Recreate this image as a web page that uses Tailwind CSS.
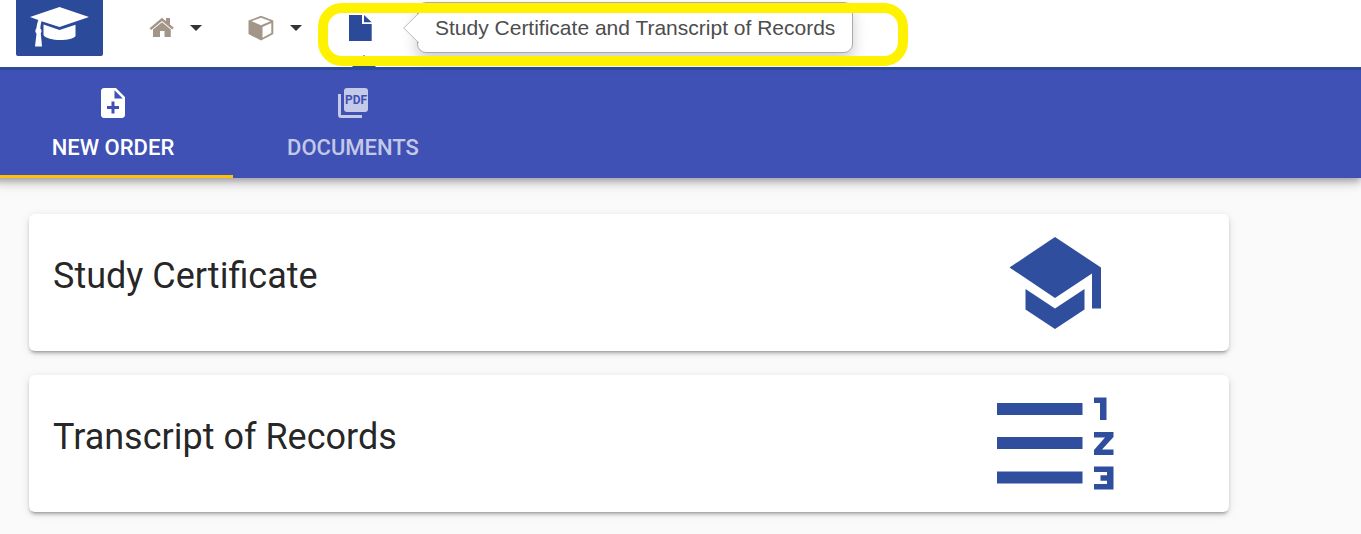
<!DOCTYPE html>
<html lang="en">
<head>
  <meta charset="UTF-8">
  <meta name="viewport" content="width=device-width, initial-scale=1.0">
  <title>Study Certificate and Transcript of Records</title>
  <script src="https://cdn.jsdelivr.net/npm/@tailwindcss/browser@4"></script>
</head>
<body class="min-h-screen overflow-x-hidden bg-[#fafafa] font-['Roboto',sans-serif]">
  <header class="relative z-10 h-[67px] bg-white px-4">
    <nav class="flex h-14 items-center gap-[46px]" aria-label="Main">
      <a href="#" aria-label="Start page" class="block h-14 w-[87px] rounded-b-xs bg-[#2c4a9a]">
        <svg class="h-14 w-[87px] fill-white" viewBox="0 0 87 56">
          <path d="M43.500 7 73 17 43.500 27 25.500 21.200Q24.500 24 24.300 28.500Q26.500 30.500 24.800 33.500L26 46.500H19L20.500 33.700Q18.200 31 20.300 28.500Q20.800 24 22.300 20L14 17Z"/>
          <path d="M27.500 24.500 43.500 30 59.500 24.700V36C56 41.500 31 41.500 27.500 35Z"/>
        </svg>
      </a>
      <button type="button" aria-label="Home" class="flex items-center gap-4">
        <svg class="h-6 w-[25px] fill-[#a39689]" viewBox="0 0 25 24">
          <path d="M.5 12.300 13 1.800 17 5.200V2H21V8.600L24.800 11.800 23.200 13.600 13 5 2.100 14.100Z"/>
          <path d="M13 6.200 21.800 13.500V21H15.500V15H11V21H4V13.600Z"/>
        </svg>
        <svg class="h-[6px] w-3 fill-[#333]" viewBox="0 0 12 6"><path d="M0 0H12L6 6Z"/></svg>
      </button>
      <button type="button" aria-label="Packages" class="flex items-center gap-4">
        <svg class="size-[26px]" viewBox="0 0 26 26">
          <path fill="#a39689" d="M13 .8 25.300 5.500V19L13 25.500.500 19V5.500Z"/>
          <path fill="#fff" d="M13 2.800 22.500 6.200 13 10.200 3.500 6.200ZM14.500 12 23.300 8V18L14.500 22.800Z"/>
        </svg>
        <svg class="h-[6px] w-3 fill-[#333]" viewBox="0 0 12 6"><path d="M0 0H12L6 6Z"/></svg>
      </button>
      <a href="#" aria-describedby="orders-tip" aria-label="Orders" class="relative flex h-14 items-center">
        <svg class="h-[26px] w-6 fill-[#2c4a9a]" viewBox="0 0 24 26">
          <path d="M1 0H14V9H23.700V26H1ZM16 0 23.700 7.200H16Z"/>
        </svg>
        <svg class="absolute top-[55px] left-1 h-3 w-6 fill-[#2c4a9a]" viewBox="0 0 24 12"><path d="M12 0 24 12H0Z"/></svg>
        <span id="orders-tip" role="tooltip" class="absolute top-[2px] left-[69px] flex h-[51px] items-center rounded-[9px] border border-[#aaa] bg-white px-[17px] font-['Liberation_Sans',sans-serif] text-[21px] whitespace-nowrap text-[#4d4d4d] shadow-[0_8px_15px_rgba(0,0,0,0.2)]">
          <svg class="absolute top-[10px] -left-[15px] h-[30px] w-4" viewBox="0 0 16 30">
            <path d="M16 0 .7 15 16 30" fill="#fff" stroke="#bbb"/>
          </svg>
          Study Certificate and Transcript of Records
        </span>
      </a>
    </nav>
    <!-- marker around the orders entry -->
    <div class="pointer-events-none absolute top-[3px] left-[318px] h-[63px] w-[590px] rounded-[24px] border-10 border-[#fff200]"></div>
  </header>

  <div class="overflow-x-clip">
    <div role="tablist" class="-ml-[7px] flex border-t-3 border-[#2c4a9a] bg-[#3f51b5] text-[22px] leading-[30px] font-medium text-white shadow-[0_3px_6px_-1px_rgba(0,0,0,0.2),0_6px_8px_rgba(0,0,0,0.14),0_2px_15px_rgba(0,0,0,0.12)]">
      <button type="button" role="tab" aria-selected="true" class="relative flex h-[108px] w-60 flex-col items-center justify-center gap-3">
        <svg class="size-9 fill-white" viewBox="0 0 24 24">
          <path d="M14 2H6c-1.100 0-1.990.9-1.990 2L4 20c0 1.100.89 2 1.990 2H18c1.100 0 2-.9 2-2V8l-6-6zm2 14h-3v3h-2v-3H8v-2h3v-3h2v3h3v2zm-3-7V3.500L18.500 9H13z"/>
        </svg>
        NEW ORDER
        <span class="absolute inset-x-0 bottom-0 h-[3px] bg-[#ffc107]"></span>
      </button>
      <button type="button" role="tab" aria-selected="false" class="flex h-[108px] w-60 flex-col items-center justify-center gap-3 text-white/70">
        <svg class="size-9" viewBox="0 0 36 36">
          <path fill="#c5cae9" d="M30 3H12a3 3 0 0 0-3 3V24a3 3 0 0 0 3 3H30a3 3 0 0 0 3-3V6a3 3 0 0 0-3-3ZM6 9H3V30a3 3 0 0 0 3 3H27V30H6Z"/>
          <text x="21" y="19" text-anchor="middle" class="fill-[#3f51b5] text-[12px] font-bold">PDF</text>
        </svg>
        DOCUMENTS
      </button>
    </div>
  </div>

  <main class="mx-[29px] mt-9 mb-5 flex max-w-[1200px] flex-col gap-6">
    <a href="#" class="flex h-[137px] items-center rounded-md bg-white shadow-[0_4px_2px_-3px_rgba(0,0,0,0.2),0_3px_3px_rgba(0,0,0,0.14),0_2px_8px_rgba(0,0,0,0.12)]">
      <h2 class="grow pb-[14px] pl-6 text-4xl text-black/87">Study Certificate</h2>
      <span class="flex w-[29%] justify-center">
        <svg class="h-24 w-[120px] fill-[#304e9e]" viewBox="0 0 120 96">
          <path d="M60 2 106 32.500V73.500H97V38.500L60 63 14.500 32.500Z"/>
          <path d="M30.500 54 60 73.500 89.500 54V74.500L60 94 30.500 74.500Z"/>
        </svg>
      </span>
    </a>
    <a href="#" class="flex h-[137px] items-center rounded-md bg-white shadow-[0_4px_2px_-3px_rgba(0,0,0,0.2),0_3px_3px_rgba(0,0,0,0.14),0_2px_8px_rgba(0,0,0,0.12)]">
      <h2 class="grow pb-[14px] pl-6 text-4xl text-black/87">Transcript of Records</h2>
      <span class="flex w-[29%] justify-center">
        <svg class="h-24 w-[120px] fill-[#304e9e]" viewBox="0 0 120 96">
          <path d="M2 7H87.500V19H2ZM2 41H87.500V53H2ZM2 75.500H87.500V87.500H2Z"/>
          <path d="M99 1.500H111.500V24H105V7H99ZM99 36H118.500V41L107 53.500H118.500V59H99V54L110 41.500H99ZM99 70.500H118.500V93.500H99V88H112V84.800H105.500V79.200H112V76H99Z"/>
        </svg>
      </span>
    </a>
  </main>
</body>
</html>
